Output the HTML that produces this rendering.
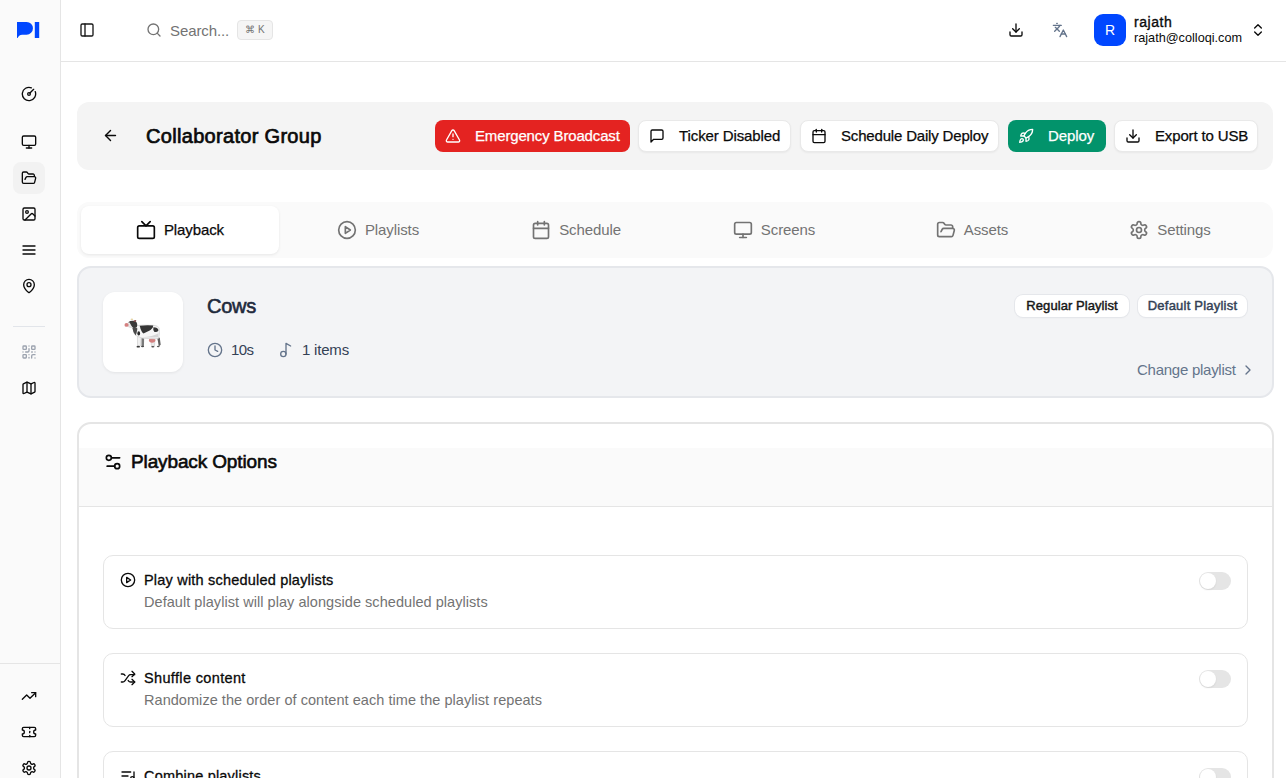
<!DOCTYPE html>
<html><head><meta charset="utf-8">
<style>
*{box-sizing:border-box;margin:0;padding:0}
html,body{width:1286px;height:778px;overflow:hidden;background:#fff;font-family:"Liberation Sans",sans-serif;color:#0a0a0a}
.abs{position:absolute}
svg.i{fill:none;stroke:currentColor;stroke-width:2;stroke-linecap:round;stroke-linejoin:round;display:block}
#sb{left:0;top:0;width:61px;height:778px;background:#fafafa;border-right:1px solid #e5e5e5}
.sbi{position:absolute;left:21px;width:16px;height:16px;color:#0a0a0a}
#hdr{left:61px;top:0;width:1225px;height:62px;border-bottom:1px solid #e5e5e5;background:#fff}
.txt{position:absolute;white-space:nowrap;line-height:1}
.btn{top:120px;height:32px;border-radius:8px;font-size:15px;white-space:nowrap;-webkit-text-stroke:0.25px currentColor}
.btn svg{-webkit-text-stroke:0}
.btn svg{position:absolute;left:10px;top:8px}
.btn span{position:absolute;left:40px;top:7.6px;line-height:1}
.btn.red{background:#e42321;color:#fff}
.btn.grn{background:#02936b;color:#fff}
.btn.wht{background:#fff;color:#0a0a0a;border:1px solid #e9e9e9;box-shadow:0 1px 2px rgba(0,0,0,.05)}
.btn.wht svg{left:10px;top:7px}
.btn.wht span{left:40px;top:6.6px}
.tab{top:206px;width:198px;height:48px;display:flex;align-items:center;justify-content:center;font-size:15px;color:#737373;letter-spacing:-0.1px}
.tab svg{margin-right:8px}
.tab span{position:relative;top:-1px}
.tab.on span{-webkit-text-stroke:0.25px currentColor}
.badge{top:295px;height:22px;background:#fff;border-radius:8px;font-size:13px;-webkit-text-stroke:0.45px currentColor;line-height:22px;text-align:center;box-shadow:0 0 0 1px #e5e7eb,0 1px 2px rgba(0,0,0,.05)}
.opt{left:103px;width:1145px;border:1px solid #e5e5e5;border-radius:10px;background:#fff}
.tog{left:1199px;width:32px;height:18px;border-radius:9px;background:#e5e5e5}
.tog:after{content:"";position:absolute;left:1px;top:1px;width:16px;height:16px;border-radius:50%;background:#fff;box-shadow:0 1px 2px rgba(0,0,0,.08)}
.ot{font-size:14.5px;color:#0a0a0a;-webkit-text-stroke:0.3px currentColor;letter-spacing:0.2px}
.os{font-size:14.5px;color:#737373;letter-spacing:0.05px}
</style></head><body>
<!-- SIDEBAR -->
<div id="sb" class="abs">
  <svg class="abs" style="left:17px;top:22px" width="23" height="16" viewBox="0 0 23 16"><path fill="#0047ff" d="M0 0H9.6A6.35 6.35 0 0 1 9.6 12.7H5Q2.6 12.7 1.3 14.8L0.6 16H0Z"/><rect x="17.8" y="0" width="4.4" height="16" fill="#0047ff"/></svg>
  <div class="abs" style="left:13px;top:162px;width:32px;height:32px;border-radius:8px;background:#f2f2f2"></div>
  <svg class="i sbi" style="top:86px" viewBox="0 0 24 24"><path d="M15.6 2.7a10 10 0 1 0 5.7 5.7"/><circle cx="12" cy="12" r="2"/><path d="M13.4 10.6 19 5"/></svg>
  <svg class="i sbi" style="top:134px" viewBox="0 0 24 24"><rect width="20" height="14" x="2" y="3" rx="2"/><line x1="8" x2="16" y1="21" y2="21"/><line x1="12" x2="12" y1="17" y2="21"/></svg>
  <svg class="i sbi" style="top:170px" viewBox="0 0 24 24"><path d="m6 14 1.5-2.9A2 2 0 0 1 9.24 10H20a2 2 0 0 1 1.94 2.5l-1.54 6a2 2 0 0 1-1.950 1.5H4a2 2 0 0 1-2-2V5a2 2 0 0 1 2-2h3.9a2 2 0 0 1 1.69.9l.81 1.2a2 2 0 0 0 1.67.9H18a2 2 0 0 1 2 2v2"/></svg>
  <svg class="i sbi" style="top:206px" viewBox="0 0 24 24"><rect width="18" height="18" x="3" y="3" rx="2" ry="2"/><circle cx="9" cy="9" r="2"/><path d="m21 15-3.086-3.086a2 2 0 0 0-2.828 0L6 21"/></svg>
  <svg class="i sbi" style="top:242px" viewBox="0 0 24 24"><line x1="3" x2="21" y1="6" y2="6"/><line x1="3" x2="21" y1="12" y2="12"/><line x1="3" x2="21" y1="18" y2="18"/></svg>
  <svg class="i sbi" style="top:278px" viewBox="0 0 24 24"><path d="M20 10c0 4.993-5.539 10.193-7.399 11.799a1 1 0 0 1-1.202 0C9.539 20.193 4 14.993 4 10a8 8 0 0 1 16 0"/><circle cx="12" cy="10" r="3"/></svg>
  <div class="abs" style="left:13px;top:326px;width:32px;height:1px;background:#e2e5ea"></div>
  <svg class="i sbi" style="top:344px;color:#9ca3af" viewBox="0 0 24 24"><rect width="5" height="5" x="3" y="3" rx="1"/><rect width="5" height="5" x="16" y="3" rx="1"/><rect width="5" height="5" x="3" y="16" rx="1"/><path d="M21 16h-3a2 2 0 0 0-2 2v3"/><path d="M21 21v.01"/><path d="M12 7v3a2 2 0 0 1-2 2H7"/><path d="M3 12h.01"/><path d="M12 3h.01"/><path d="M12 16v.01"/><path d="M16 12h1"/><path d="M21 12v.01"/><path d="M12 21v-1"/></svg>
  <svg class="i sbi" style="top:380px" viewBox="0 0 24 24"><path d="M14.106 5.553a2 2 0 0 0 1.788 0l3.659-1.830A1 1 0 0 1 21 4.619v12.764a1 1 0 0 1-.553.894l-4.553 2.277a2 2 0 0 1-1.788 0l-4.212-2.106a2 2 0 0 0-1.788 0l-3.659 1.830A1 1 0 0 1 3 19.381V6.618a1 1 0 0 1 .553-.894l4.553-2.277a2 2 0 0 1 1.788 0z"/><path d="M15 5.764v15"/><path d="M9 3.236v15"/></svg>
  <div class="abs" style="left:0;top:663px;width:60px;height:1px;background:#e5e5e5"></div>
  <svg class="i sbi" style="top:688px" viewBox="0 0 24 24"><polyline points="22 7 13.5 15.5 8.5 10.5 2 17"/><polyline points="16 7 22 7 22 13"/></svg>
  <svg class="i sbi" style="top:724px" viewBox="0 0 24 24"><path d="M2 9a3 3 0 0 1 0 6v2a2 2 0 0 0 2 2h16a2 2 0 0 0 2-2v-2a3 3 0 0 1 0-6V7a2 2 0 0 0-2-2H4a2 2 0 0 0-2 2Z"/><path d="M13 5v2"/><path d="M13 17v2"/><path d="M13 11v2"/></svg>
  <svg class="i sbi" style="top:760px" viewBox="0 0 24 24"><path d="M12.22 2h-.44a2 2 0 0 0-2 2v.18a2 2 0 0 1-1 1.73l-.43.25a2 2 0 0 1-2 0l-.15-.08a2 2 0 0 0-2.73.73l-.22.38a2 2 0 0 0 .73 2.730l.15.1a2 2 0 0 1 1 1.72v.51a2 2 0 0 1-1 1.74l-.15.09a2 2 0 0 0-.73 2.73l.22.38a2 2 0 0 0 2.73.73l.15-.08a2 2 0 0 1 2 0l.43.25a2 2 0 0 1 1 1.73V20a2 2 0 0 0 2 2h.44a2 2 0 0 0 2-2v-.18a2 2 0 0 1 1-1.73l.43-.25a2 2 0 0 1 2 0l.15.08a2 2 0 0 0 2.73-.73l.22-.39a2 2 0 0 0-.73-2.73l-.15-.08a2 2 0 0 1-1-1.74v-.5a2 2 0 0 1 1-1.740l.15-.09a2 2 0 0 0 .73-2.73l-.22-.38a2 2 0 0 0-2.73-.73l-.15.08a2 2 0 0 1-2 0l-.43-.25a2 2 0 0 1-1-1.73V4a2 2 0 0 0-2-2z"/><circle cx="12" cy="12" r="3"/></svg>
</div>
<!-- HEADER -->
<div id="hdr" class="abs"></div>
<svg class="i abs" style="left:79px;top:22px;color:#171717" width="16" height="16" viewBox="0 0 24 24"><rect width="18" height="18" x="3" y="3" rx="2"/><path d="M9 3v18"/></svg>
<svg class="i abs" style="left:146px;top:22px;color:#737373" width="16" height="16" viewBox="0 0 24 24"><circle cx="11" cy="11" r="8"/><path d="m21 21-4.3-4.3"/></svg>
<div class="txt" style="left:170px;top:23px;font-size:15px;color:#737373;letter-spacing:-0.1px">Search...</div>
<div class="abs" style="left:237px;top:20px;width:36px;height:20px;border:1px solid #e5e5e5;background:#f5f5f5;border-radius:4px;font-size:10px;color:#737373;line-height:18px;text-align:center">&#8984; K</div>
<svg class="i abs" style="left:1008px;top:22px;color:#0a0a0a" width="16" height="16" viewBox="0 0 24 24"><path d="M21 15v4a2 2 0 0 1-2 2H5a2 2 0 0 1-2-2v-4"/><polyline points="7 10 12 15 17 10"/><line x1="12" x2="12" y1="15" y2="3"/></svg>
<svg class="i abs" style="left:1052px;top:22px;color:#64748b" width="16" height="16" viewBox="0 0 24 24"><path d="m5 8 6 6"/><path d="m4 14 6-6 2-3"/><path d="M2 5h12"/><path d="M7 2h1"/><path d="m22 22-5-10-5 10"/><path d="M14 18h6"/></svg>
<div class="abs" style="left:1094px;top:14px;width:32px;height:32px;border-radius:9px;background:#0047ff;color:#fff;font-size:14px;line-height:32px;text-align:center">R</div>
<div class="txt" style="left:1134px;top:15px;font-size:14px;-webkit-text-stroke:0.35px #0a0a0a;color:#0a0a0a;letter-spacing:0.55px">rajath</div>
<div class="txt" style="left:1134px;top:32px;font-size:12.7px;color:#0a0a0a;letter-spacing:0px">rajath@colloqi.com</div>
<svg class="i abs" style="left:1250px;top:22px;color:#0a0a0a" width="16" height="16" viewBox="0 0 24 24"><path d="m7 15 5 5 5-5"/><path d="m7 9 5-5 5 5"/></svg>
<!-- PAGE HEADER CARD -->
<div class="abs" style="left:77px;top:102px;width:1196px;height:68px;background:#f4f4f4;border-radius:12px"></div>
<svg class="i abs" style="left:102px;top:127px;color:#0a0a0a" width="17" height="17" viewBox="0 0 24 24"><path d="m12 19-7-7 7-7"/><path d="M19 12H5"/></svg>
<div class="txt" style="left:146px;top:126px;font-size:20px;-webkit-text-stroke:0.7px #0a0a0a;color:#0a0a0a;letter-spacing:0.31px">Collaborator Group</div>

<div class="btn red abs" style="left:435px;width:195px"><svg class="i" width="16" height="16" viewBox="0 0 24 24"><path d="m21.73 18-8-14a2 2 0 0 0-3.48 0l-8 14A2 2 0 0 0 4 21h16a2 2 0 0 0 1.73-3"/><path d="M12 9v4"/><path d="M12 17h.01"/></svg><span style="letter-spacing:-0.15px">Emergency Broadcast</span></div>
<div class="btn wht abs" style="left:638px;width:153px"><svg class="i" width="16" height="16" viewBox="0 0 24 24"><path d="M21 15a2 2 0 0 1-2 2H7l-4 4V5a2 2 0 0 1 2-2h14a2 2 0 0 1 2 2z"/></svg><span style="letter-spacing:-0.1px">Ticker Disabled</span></div>
<div class="btn wht abs" style="left:800px;width:199px"><svg class="i" width="16" height="16" viewBox="0 0 24 24"><rect width="18" height="18" x="3" y="4" rx="2"/><path d="M16 2v4"/><path d="M8 2v4"/><path d="M3 10h18"/></svg><span style="letter-spacing:-0.175px">Schedule Daily Deploy</span></div>
<div class="btn grn abs" style="left:1008px;width:98px"><svg class="i" width="16" height="16" viewBox="0 0 24 24"><path d="M4.5 16.5c-1.5 1.26-2 5-2 5s3.740-.5 5-2c.71-.84.7-2.13-.09-2.91a2.18 2.18 0 0 0-2.91-.09z"/><path d="m12 15-3-3a22 22 0 0 1 2-3.95A12.880 12.880 0 0 1 22 2c0 2.72-.78 7.5-6 11a22.350 22.350 0 0 1-4 2z"/><path d="M9 12H4s.55-3.03 2-4c1.62-1.08 5 0 5 0"/><path d="M12 15v5s3.03-.55 4-2c1.080-1.62 0-5 0-5"/></svg><span style="letter-spacing:-0.1px">Deploy</span></div>
<div class="btn wht abs" style="left:1114px;width:144px"><svg class="i" width="16" height="16" viewBox="0 0 24 24"><path d="M21 15v4a2 2 0 0 1-2 2H5a2 2 0 0 1-2-2v-4"/><polyline points="7 10 12 15 17 10"/><line x1="12" x2="12" y1="15" y2="3"/></svg><span style="letter-spacing:-0.15px">Export to USB</span></div>

<!-- TABS -->
<div class="abs" style="left:77px;top:202px;width:1196px;height:56px;background:#fafafa;border-radius:12px"></div>
<div class="abs" style="left:81px;top:206px;width:198px;height:48px;background:#fff;border-radius:8px;box-shadow:0 1px 3px rgba(0,0,0,.08)"></div>
<div class="tab on abs" style="left:81px;color:#0a0a0a"><svg class="i" width="20" height="20" viewBox="0 0 24 24"><rect width="20" height="15" x="2" y="7" rx="2" ry="2"/><polyline points="17 2 12 7 7 2"/></svg><span>Playback</span></div>
<div class="tab abs" style="left:279px"><svg class="i" width="20" height="20" viewBox="0 0 24 24"><circle cx="12" cy="12" r="10"/><polygon points="10 8 16 12 10 16 10 8"/></svg><span>Playlists</span></div>
<div class="tab abs" style="left:477px"><svg class="i" width="20" height="20" viewBox="0 0 24 24"><rect width="18" height="18" x="3" y="4" rx="2"/><path d="M16 2v4"/><path d="M8 2v4"/><path d="M3 10h18"/></svg><span>Schedule</span></div>
<div class="tab abs" style="left:675px"><svg class="i" width="20" height="20" viewBox="0 0 24 24"><rect width="20" height="14" x="2" y="3" rx="2"/><line x1="8" x2="16" y1="21" y2="21"/><line x1="12" x2="12" y1="17" y2="21"/></svg><span>Screens</span></div>
<div class="tab abs" style="left:873px"><svg class="i" width="20" height="20" viewBox="0 0 24 24"><path d="m6 14 1.5-2.9A2 2 0 0 1 9.24 10H20a2 2 0 0 1 1.94 2.5l-1.54 6a2 2 0 0 1-1.95 1.5H4a2 2 0 0 1-2-2V5a2 2 0 0 1 2-2h3.9a2 2 0 0 1 1.69.9l.81 1.2a2 2 0 0 0 1.67.9H18a2 2 0 0 1 2 2v2"/></svg><span>Assets</span></div>
<div class="tab abs" style="left:1071px"><svg class="i" width="20" height="20" viewBox="0 0 24 24"><path d="M12.22 2h-.44a2 2 0 0 0-2 2v.18a2 2 0 0 1-1 1.73l-.43.25a2 2 0 0 1-2 0l-.15-.08a2 2 0 0 0-2.73.73l-.22.38a2 2 0 0 0 .73 2.73l.15.1a2 2 0 0 1 1 1.72v.51a2 2 0 0 1-1 1.74l-.15.09a2 2 0 0 0-.73 2.73l.22.38a2 2 0 0 0 2.73.73l.15-.08a2 2 0 0 1 2 0l.43.25a2 2 0 0 1 1 1.73V20a2 2 0 0 0 2 2h.44a2 2 0 0 0 2-2v-.18a2 2 0 0 1 1-1.73l.43-.25a2 2 0 0 1 2 0l.15.08a2 2 0 0 0 2.73-.73l.22-.39a2 2 0 0 0-.73-2.73l-.15-.08a2 2 0 0 1-1-1.74v-.5a2 2 0 0 1 1-1.74l.15-.09a2 2 0 0 0 .73-2.73l-.22-.38a2 2 0 0 0-2.73-.73l-.15.08a2 2 0 0 1-2 0l-.43-.25a2 2 0 0 1-1-1.73V4a2 2 0 0 0-2-2z"/><circle cx="12" cy="12" r="3"/></svg><span>Settings</span></div>

<!-- PLAYLIST CARD -->
<div class="abs" style="left:77px;top:266px;width:1197px;height:132px;background:#f3f4f6;border:2px solid #e5e7eb;border-radius:14px"></div>
<div class="abs" style="left:103px;top:292px;width:80px;height:80px;background:#fff;border-radius:12px;box-shadow:0 1px 3px rgba(0,0,0,.07)"></div>
<svg class="abs" style="left:118px;top:310px" width="50" height="45" viewBox="0 0 864 778">
  <path d="M405 470 L452 470 L448 625 L405 635 Z" fill="#7a7a7a"/>
  <path d="M675 470 L722 480 L738 600 L705 630 L690 540 Z" fill="#5e5e5e"/>
  <path d="M335 440 L400 450 L392 620 L355 632 L338 615 Z" fill="#f0f0f0" stroke="#c8c8c8" stroke-width="10"/>
  <path d="M572 470 L640 480 L632 620 L592 632 L575 600 Z" fill="#ebebeb" stroke="#c4c4c4" stroke-width="10"/>
  <ellipse cx="350" cy="635" rx="30" ry="15" fill="#3a3a3a"/>
  <ellipse cx="425" cy="632" rx="26" ry="14" fill="#4a4a4a"/>
  <ellipse cx="602" cy="635" rx="28" ry="14" fill="#4a4a4a"/>
  <ellipse cx="695" cy="630" rx="24" ry="12" fill="#5a5a5a"/>
  <ellipse cx="590" cy="525" rx="55" ry="42" fill="#d4807f"/>
  <path d="M290 270 Q420 255 610 265 Q700 270 712 320 Q725 430 700 490 Q640 505 560 495 Q450 495 400 480 Q320 460 280 410 Q250 340 290 270 Z" fill="#f6f6f6" stroke="#cfcfcf" stroke-width="12"/>
  <path d="M420 470 Q540 480 690 470 Q700 430 700 400 Q600 460 420 470 Z" fill="#d6d6d6"/>
  <path d="M375 272 Q500 255 610 268 Q600 330 540 360 Q480 390 440 405 Q400 380 375 272 Z" fill="#363636"/>
  <path d="M612 300 Q690 300 700 350 Q680 390 630 380 Q600 340 612 300 Z" fill="#363636"/>
  <ellipse cx="358" cy="405" rx="24" ry="36" fill="#2a2a2a"/>
  <path d="M245 300 Q300 280 335 320 Q325 400 305 440 Q255 380 245 300 Z" fill="#4a4a4a"/>
  <path d="M175 210 Q240 170 310 200 Q345 240 325 300 Q280 315 230 290 Q190 270 175 210 Z" fill="#3a3a3a"/>
  <path d="M160 230 Q175 200 200 215 Q235 280 250 300 Q200 300 170 285 Z" fill="#e8e8e8"/>
  <path d="M175 270 Q215 300 265 300 Q230 320 180 300 Z" fill="#dcdcdc"/>
  <ellipse cx="148" cy="258" rx="36" ry="32" fill="#d48080"/>
  <path d="M268 188 Q300 160 318 182 Q305 212 275 208 Z" fill="#7d4444"/>
  <ellipse cx="240" cy="160" rx="22" ry="15" fill="#e6d5a8"/>
</svg>
<div class="txt" style="left:207px;top:296px;font-size:20px;-webkit-text-stroke:0.6px #1e293b;color:#1e293b;letter-spacing:-0.27px">Cows</div>
<svg class="i abs" style="left:207px;top:342px;color:#64748b" width="16" height="16" viewBox="0 0 24 24"><circle cx="12" cy="12" r="10"/><polyline points="12 6 12 12 16 14"/></svg>
<div class="txt" style="left:231px;top:342px;font-size:15px;color:#334155;letter-spacing:-0.6px">10s</div>
<svg class="i abs" style="left:277.5px;top:342px;color:#64748b" width="16" height="16" viewBox="0 0 24 24"><circle cx="8" cy="18" r="4"/><path d="M12 18V2l7 4"/></svg>
<div class="txt" style="left:302px;top:342px;font-size:15px;color:#334155;letter-spacing:-0.2px">1 items</div>
<div class="badge abs" style="left:1015px;width:114px;color:#171717;letter-spacing:0.06px">Regular Playlist</div>
<div class="badge abs" style="left:1138px;width:109px;color:#334155;letter-spacing:0.22px">Default Playlist</div>
<div class="txt" style="left:1137px;top:362.3px;font-size:15px;color:#64748b;letter-spacing:-0.26px">Change playlist</div>
<svg class="i abs" style="left:1240px;top:362px;color:#64748b" width="16" height="16" viewBox="0 0 24 24"><path d="m9 18 6-6-6-6"/></svg>

<!-- PLAYBACK OPTIONS -->
<div class="abs" style="left:77px;top:422px;width:1197px;height:400px;background:#fff;border:2px solid #e5e5e5;border-radius:14px;overflow:hidden">
  <div style="margin-top:24px;height:59px;background:#fafafa;border-bottom:1px solid #e5e5e5"></div>
</div>
<svg class="i abs" style="left:103px;top:452px;color:#0a0a0a" width="20" height="20" viewBox="0 0 24 24"><path d="M20 7h-9"/><path d="M14 17H5"/><circle cx="17" cy="17" r="3"/><circle cx="7" cy="7" r="3"/></svg>
<div class="txt" style="left:131px;top:452px;font-size:19px;-webkit-text-stroke:0.6px #0a0a0a;color:#0a0a0a;letter-spacing:-0.13px">Playback Options</div>

<div class="opt abs" style="top:555px;height:74px"></div>
<svg class="i abs" style="left:120px;top:572px;color:#0a0a0a" width="16" height="16" viewBox="0 0 24 24"><circle cx="12" cy="12" r="10"/><polygon points="10 8 16 12 10 16 10 8"/></svg>
<div class="txt ot" style="left:144px;top:573px">Play with scheduled playlists</div>
<div class="txt os" style="left:144px;top:595px">Default playlist will play alongside scheduled playlists</div>
<div class="tog abs" style="top:572px"></div>

<div class="opt abs" style="top:653px;height:74px"></div>
<svg class="i abs" style="left:120px;top:670px;color:#0a0a0a" width="16" height="16" viewBox="0 0 24 24"><path d="m18 14 4 4-4 4"/><path d="m18 2 4 4-4 4"/><path d="M2 18h1.973a4 4 0 0 0 3.3-1.7l5.454-7.6a4 4 0 0 1 3.3-1.7H22"/><path d="M2 6h1.972a4 4 0 0 1 3.6 2.2"/><path d="M22 18h-6.041a4 4 0 0 1-3.3-1.8l-.359-.45"/></svg>
<div class="txt ot" style="left:144px;top:671px;letter-spacing:0.35px">Shuffle content</div>
<div class="txt os" style="left:144px;top:693px">Randomize the order of content each time the playlist repeats</div>
<div class="tog abs" style="top:670px"></div>

<div class="opt abs" style="top:751px;height:74px"></div>
<svg class="i abs" style="left:120px;top:768px;color:#0a0a0a" width="16" height="16" viewBox="0 0 24 24"><path d="M21 15V6"/><path d="M18.5 18a2.5 2.5 0 1 0 0-5 2.5 2.5 0 0 0 0 5Z"/><path d="M12 12H3"/><path d="M16 6H3"/><path d="M12 18H3"/></svg>
<div class="txt ot" style="left:144px;top:769px">Combine playlists</div>
<div class="tog abs" style="top:768px"></div>
</body></html>
